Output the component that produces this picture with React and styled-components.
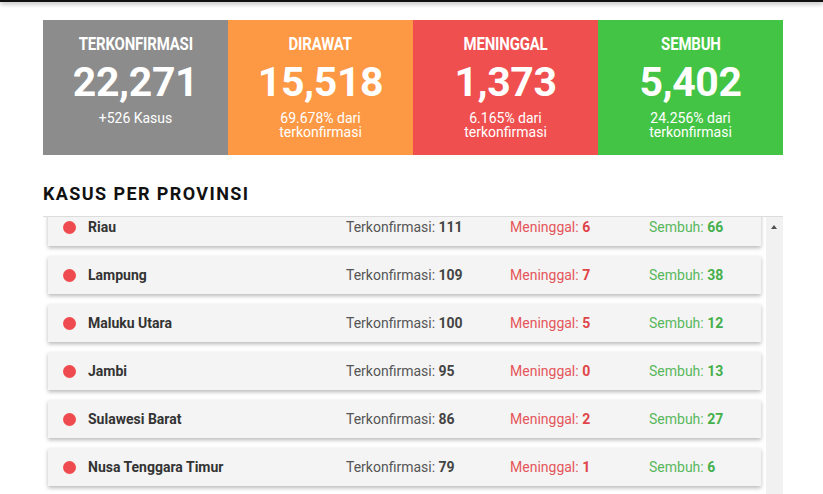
import React, { useLayoutEffect, useRef } from "react";
import styled, { createGlobalStyle } from "styled-components";

const GlobalStyle = createGlobalStyle`
  html, body {
    margin: 0;
    padding: 0;
    background: #fff;
    font-family: Roboto, "Liberation Sans", Arial, sans-serif;
    overflow: hidden;
  }
`;

const TopBar = styled.div`
  height: 2px;
  background: #111;
  box-shadow: 0 1px 5px rgba(0, 0, 0, 0.55);
`;

const Page = styled.main`
  width: 740px;
  margin-left: 43px;
  padding-top: 18px;
`;

const Stats = styled.section`
  display: grid;
  grid-template-columns: repeat(4, 1fr);
`;

const StatCard = styled.div`
  height: 135px;
  box-sizing: border-box;
  padding-top: 13px;
  background: ${(p) => p.bg};
  color: #fff;
  text-align: center;
`;

const StatTitle = styled.div`
  font-size: 18px;
  line-height: 21px;
  font-weight: 700;
  letter-spacing: -0.2px;
  span {
    display: inline-block;
    transform: scaleX(0.83);
  }
`;

const StatNumber = styled.div`
  font-size: 41px;
  line-height: 49px;
  font-weight: 700;
  letter-spacing: -0.4px;
  margin-top: 4px;
`;

const StatSub = styled.div`
  font-size: 14px;
  line-height: 14px;
  margin-top: 4px;
`;

const Heading = styled.h2`
  margin: 28px 0 12px;
  font-size: 18px;
  line-height: 21px;
  font-weight: 700;
  letter-spacing: 1.4px;
  color: #111;
`;

const ListFrame = styled.div`
  display: flex;
  border-top: 1px solid #dcdcdc;
  height: 300px;
`;

const ListScroll = styled.div`
  flex: 1;
  overflow: hidden;
`;

const ListInner = styled.div`
  padding: 5px 5px 60px;
  display: flex;
  flex-direction: column;
  gap: 10px;
`;

const Rail = styled.div`
  width: 17px;
  background: #f1f1f1;
  position: relative;
  &::before {
    content: "";
    position: absolute;
    top: 8px;
    left: 5px;
    border-left: 3.5px solid transparent;
    border-right: 3.5px solid transparent;
    border-bottom: 4px solid #505050;
  }
`;

const Row = styled.div`
  height: 38px;
  display: grid;
  grid-template-columns: 25px 258px 164px 139px 1fr;
  align-items: center;
  padding-left: 15px;
  background: #f4f4f4;
  box-shadow: 0 2px 4px rgba(0, 0, 0, 0.28);
  font-size: 14px;
`;

const Dot = styled.span`
  width: 13px;
  height: 13px;
  border-radius: 50%;
  background: #ef4b4f;
`;

const Name = styled.span`
  font-weight: 700;
  color: #333;
`;

const Cell = styled.span`
  color: ${(p) => p.color};
  b {
    font-weight: 700;
    color: ${(p) => p.strong};
  }
`;

const stats = [
  { title: "TERKONFIRMASI", value: "22,271", sub: ["+526 Kasus"], bg: "#8c8c8c" },
  { title: "DIRAWAT", value: "15,518", sub: ["69.678% dari", "terkonfirmasi"], bg: "#fd9944" },
  { title: "MENINGGAL", value: "1,373", sub: ["6.165% dari", "terkonfirmasi"], bg: "#f04f4f" },
  { title: "SEMBUH", value: "5,402", sub: ["24.256% dari", "terkonfirmasi"], bg: "#44c444" },
];

const provinces = [
  { name: "Riau", conf: 111, dead: 6, cured: 66 },
  { name: "Lampung", conf: 109, dead: 7, cured: 38 },
  { name: "Maluku Utara", conf: 100, dead: 5, cured: 12 },
  { name: "Jambi", conf: 95, dead: 0, cured: 13 },
  { name: "Sulawesi Barat", conf: 86, dead: 2, cured: 27 },
  { name: "Nusa Tenggara Timur", conf: 79, dead: 1, cured: 6 },
];

export default function App() {
  const scrollRef = useRef(null);

  useLayoutEffect(() => {
    if (scrollRef.current) scrollRef.current.scrollTop = 14;
  }, []);

  return (
    <>
      <GlobalStyle />
      <TopBar />
      <Page>
        <Stats>
          {stats.map((s) => (
            <StatCard key={s.title} bg={s.bg}>
              <StatTitle>
                <span>{s.title}</span>
              </StatTitle>
              <StatNumber>{s.value}</StatNumber>
              <StatSub>
                {s.sub.map((line) => (
                  <div key={line}>{line}</div>
                ))}
              </StatSub>
            </StatCard>
          ))}
        </Stats>

        <Heading>KASUS PER PROVINSI</Heading>

        <ListFrame>
          <ListScroll ref={scrollRef}>
            <ListInner>
              {provinces.map((p) => (
                <Row key={p.name}>
                  <Dot />
                  <Name>{p.name}</Name>
                  <Cell color="#555" strong="#444">
                    Terkonfirmasi: <b>{p.conf}</b>
                  </Cell>
                  <Cell color="#e5565a" strong="#e04448">
                    Meninggal: <b>{p.dead}</b>
                  </Cell>
                  <Cell color="#58b85c" strong="#45b04a">
                    Sembuh: <b>{p.cured}</b>
                  </Cell>
                </Row>
              ))}
            </ListInner>
          </ListScroll>
          <Rail />
        </ListFrame>
      </Page>
    </>
  );
}
